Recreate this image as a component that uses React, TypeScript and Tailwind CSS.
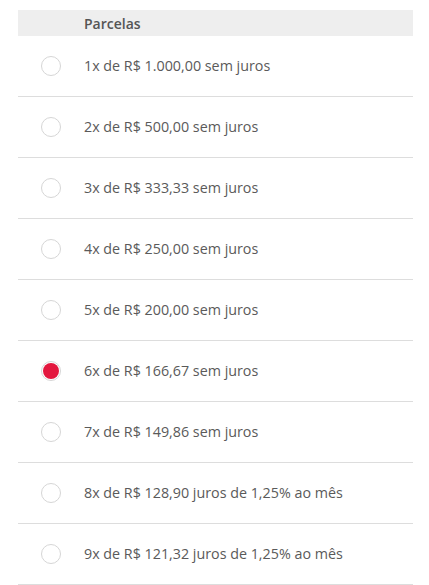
import { useState } from "react";

const options = [
  "1x de R$ 1.000,00 sem juros",
  "2x de R$ 500,00 sem juros",
  "3x de R$ 333,33 sem juros",
  "4x de R$ 250,00 sem juros",
  "5x de R$ 200,00 sem juros",
  "6x de R$ 166,67 sem juros",
  "7x de R$ 149,86 sem juros",
  "8x de R$ 128,90 juros de 1,25% ao mês",
  "9x de R$ 121,32 juros de 1,25% ao mês",
];

export default function App() {
  const [selected, setSelected] = useState(5);

  return (
    <main className="min-h-screen bg-white pt-[10px] font-['Open_Sans',sans-serif]">
      <div className="ml-[18px] w-[395px]">
        {/* Header */}
        <div className="h-[26px] bg-[#eeeeee] pl-[66px] flex items-center">
          <span className="text-[14px] font-semibold text-[#555555]">Parcelas</span>
        </div>

        {options.map((label, i) => (
          <button
            key={label}
            onClick={() => setSelected(i)}
            className="w-full h-[61px] flex items-center border-b border-[#dddddd] text-left"
          >
            <span className="ml-[23px] w-5 h-5 rounded-full border border-[#d6d6d6] bg-white flex items-center justify-center shrink-0">
              {selected === i && <span className="w-4 h-4 rounded-full bg-[#e3173e]" />}
            </span>
            <span className="ml-[23px] -mt-px text-[14.3px] text-[#5a5a5a]">{label}</span>
          </button>
        ))}
      </div>
    </main>
  );
}
